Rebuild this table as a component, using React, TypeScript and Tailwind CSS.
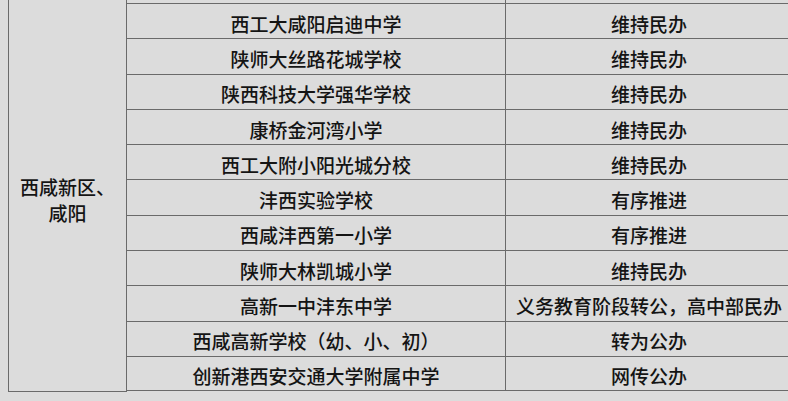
const rows: [string, string][] = [
  ["西工大咸阳启迪中学", "维持民办"],
  ["陕师大丝路花城学校", "维持民办"],
  ["陕西科技大学强华学校", "维持民办"],
  ["康桥金河湾小学", "维持民办"],
  ["西工大附小阳光城分校", "维持民办"],
  ["沣西实验学校", "有序推进"],
  ["西咸沣西第一小学", "有序推进"],
  ["陕师大林凯城小学", "维持民办"],
  ["高新一中沣东中学", "义务教育阶段转公，高中部民办"],
  ["西咸高新学校（幼、小、初）", "转为公办"],
  ["创新港西安交通大学附属中学", "网传公办"],
];

export default function App() {
  return (
    <div
      className="w-[788px] h-[401px] overflow-hidden bg-[#dcdcdc] text-[#141414] font-medium"
      style={{ fontFamily: '"Noto Sans CJK SC", "Noto Sans", sans-serif' }}
    >
      <div className="ml-2 flex w-[784px]">
        {/* merged district cell */}
        <div className="w-[119px] h-[392px] shrink-0 border-x border-b border-[#6a6a6a] flex items-center justify-center pt-[8px]">
          <p className="text-[19px] leading-[26px] text-center">
            西咸新区、
            <br />
            咸阳
          </p>
        </div>
        <div className="flex flex-col w-[665px]">
          <div className="grid grid-cols-[379px_286px] h-[3px]">
            <div className="border-r border-[#6a6a6a]" />
            <div />
          </div>
          {rows.map(([school, status], i) => (
            <div
              key={school}
              className={`grid grid-cols-[379px_286px] h-[35.3px] border-t border-[#6a6a6a] ${
                i === rows.length - 1 ? "border-b" : ""
              }`}
            >
              <div className="border-r border-[#6a6a6a] flex items-center justify-center pt-1 text-[19px] leading-none whitespace-nowrap">
                {school}
              </div>
              <div className="flex items-center justify-center pt-1 text-[19px] leading-none whitespace-nowrap">
                {status}
              </div>
            </div>
          ))}
        </div>
      </div>
    </div>
  );
}
